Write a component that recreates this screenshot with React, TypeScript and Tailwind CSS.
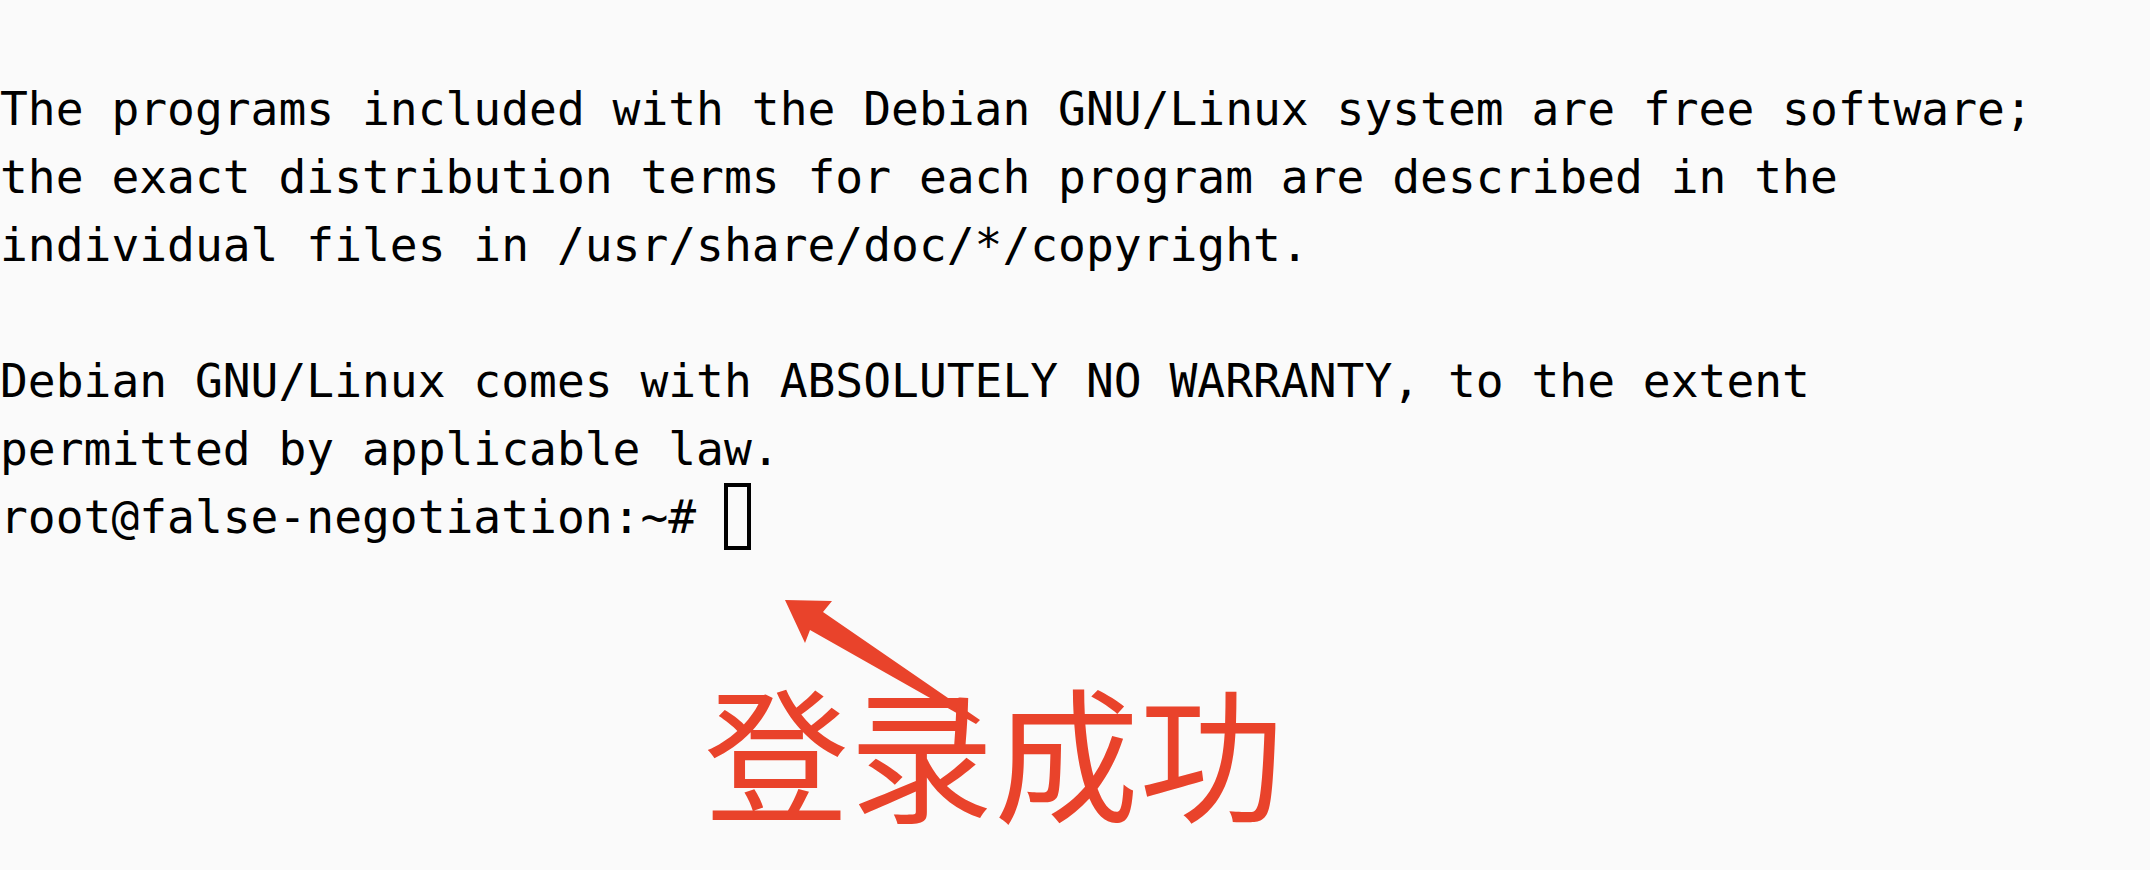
const lines = [
  "The programs included with the Debian GNU/Linux system are free software;",
  "the exact distribution terms for each program are described in the",
  "individual files in /usr/share/doc/*/copyright.",
  "",
  "Debian GNU/Linux comes with ABSOLUTELY NO WARRANTY, to the extent",
  "permitted by applicable law.",
];

export default function App() {
  return (
    <div className="relative h-[870px] w-full overflow-hidden bg-[#fafafa]">
      <div className="pt-[75px] font-['DejaVu_Sans_Mono',monospace] text-[46.26px] leading-[68px] text-black whitespace-pre">
        {lines.map((line, i) => (
          <div key={i} className="h-[68px]">
            {line}
          </div>
        ))}
        <div className="h-[68px]">
          root@false-negotiation:~#{" "}
          <span className="inline-block h-[67px] w-[27px] border-4 border-black align-top" />
        </div>
      </div>

      {/* annotation */}
      <svg
        className="absolute left-0 top-0"
        width="2150"
        height="870"
        viewBox="0 0 2150 870"
      >
        <polygon
          points="785,600 832,601 823,612 980,720 976,724 810,630 805,643"
          fill="#e9432b"
        />
      </svg>
      <div className="absolute left-[704px] top-[677px] font-['Noto_Sans_CJK_SC',sans-serif] text-[145px] leading-none text-[#e9432b]">
        登录成功
      </div>
    </div>
  );
}
